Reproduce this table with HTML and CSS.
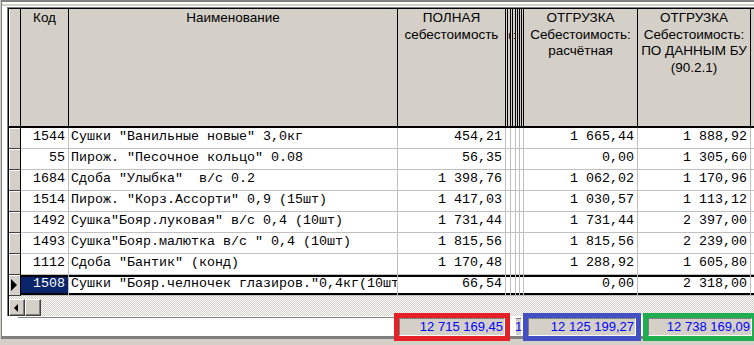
FILE: index.html
```html
<!DOCTYPE html>
<html lang="ru">
<head>
<meta charset="utf-8">
<title>Себестоимость</title>
<link rel="stylesheet" href="styles.css">
</head>
<body>
<div class="window">
  <div class="gridframe">
    <div class="grid">
      <div class="row head">
        <div class="c ind"></div>
        <div class="c">Код</div>
        <div class="c">Наименование</div>
        <div class="c"><span class="ln">ПОЛНАЯ</span><span class="ln">себестоимость</span></div>
        <div class="c nar"><span class="ln">&nbsp;</span><span class="ln">ı</span></div>
        <div class="c nar"><span class="ln">&nbsp;</span><span class="ln">:</span></div>
        <div class="c nar"><span class="ln">&nbsp;</span><span class="ln">ı</span></div>
        <div class="c nar"><span class="ln">&nbsp;</span><span class="ln">&nbsp;</span></div>
        <div class="c"><span class="ln">ОТГРУЗКА</span><span class="ln">Себестоимость:</span><span class="ln">расчётная</span></div>
        <div class="c"><span class="ln">ОТГРУЗКА</span><span class="ln">Себестоимость:</span><span class="ln">ПО ДАННЫМ БУ</span><span class="ln">(90.2.1)</span></div>
        <div class="c"><span class="ln">ОТГРУЗКА</span></div>
      </div>

      <div class="row">
        <div class="c ind"></div><div class="c num">1544</div><div class="c txt">Сушки "Ванильные новые" 3,0кг</div><div class="c num">454,21</div><div class="c"></div><div class="c"></div><div class="c"></div><div class="c"></div><div class="c num">1 665,44</div><div class="c num">1 888,92</div><div class="c"></div>
      </div>
      <div class="row">
        <div class="c ind"></div><div class="c num">55</div><div class="c txt">Пирож. "Песочное кольцо" 0.08</div><div class="c num">56,35</div><div class="c"></div><div class="c"></div><div class="c"></div><div class="c"></div><div class="c num">0,00</div><div class="c num">1 305,60</div><div class="c"></div>
      </div>
      <div class="row">
        <div class="c ind"></div><div class="c num">1684</div><div class="c txt">Сдоба "Улыбка"  в/с 0.2</div><div class="c num">1 398,76</div><div class="c"></div><div class="c"></div><div class="c"></div><div class="c"></div><div class="c num">1 062,02</div><div class="c num">1 170,96</div><div class="c"></div>
      </div>
      <div class="row">
        <div class="c ind"></div><div class="c num">1514</div><div class="c txt">Пирож. "Корз.Ассорти" 0,9 (15шт)</div><div class="c num">1 417,03</div><div class="c"></div><div class="c"></div><div class="c"></div><div class="c"></div><div class="c num">1 030,57</div><div class="c num">1 113,12</div><div class="c"></div>
      </div>
      <div class="row">
        <div class="c ind"></div><div class="c num">1492</div><div class="c txt">Сушка"Бояр.луковая" в/с 0,4 (10шт)</div><div class="c num">1 731,44</div><div class="c"></div><div class="c"></div><div class="c"></div><div class="c"></div><div class="c num">1 731,44</div><div class="c num">2 397,00</div><div class="c"></div>
      </div>
      <div class="row">
        <div class="c ind"></div><div class="c num">1493</div><div class="c txt">Сушка"Бояр.малютка в/с " 0,4 (10шт)</div><div class="c num">1 815,56</div><div class="c"></div><div class="c"></div><div class="c"></div><div class="c"></div><div class="c num">1 815,56</div><div class="c num">2 239,00</div><div class="c"></div>
      </div>
      <div class="row">
        <div class="c ind"></div><div class="c num">1112</div><div class="c txt">Сдоба "Бантик" (конд)</div><div class="c num">1 170,48</div><div class="c"></div><div class="c"></div><div class="c"></div><div class="c"></div><div class="c num">1 288,92</div><div class="c num">1 605,80</div><div class="c"></div>
      </div>
      <div class="row sel">
        <div class="c ind"><span class="cur"></span></div><div class="c num code">1508</div><div class="c txt">Сушки "Бояр.челночек глазиров."0,4кг(10шт)</div><div class="c num">66,54</div><div class="c"></div><div class="c"></div><div class="c"></div><div class="c"></div><div class="c num">0,00</div><div class="c num">2 318,00</div><div class="c"></div>
      </div>

      <div class="hscroll">
        <div class="sbtn"><span class="larr"></span></div>
        <div class="sbtn thumb"></div>
      </div>
    </div>
  </div>

  <div class="footer">
    <div class="fwhite"></div>
    <div class="field red">12 715 169,45</div>
    <div class="field narrow">1</div>
    <div class="field blue">12 125 199,27</div>
    <div class="field green">12 738 169,09</div>
  </div>
</div>
</body>
</html>
```

FILE: styles.css
```css
html, body {
  margin: 0;
  padding: 0;
}

body {
  width: 754px;
  height: 345px;
  overflow: hidden;
  background: #d4d0c8;
  font-family: "Liberation Sans", Arial, sans-serif;
}

.window {
  box-sizing: border-box;
  width: 753px;
  height: 339px;
  margin-left: 1px;
  border-left: 1px solid #808080;
  border-top: 2px solid #808080;
  border-bottom: 3px solid #808080;
  padding: 5px 0 0 5px;
  background: linear-gradient(#ffffff 0 2px, #d4d0c8 2px 4px, #ffffff 4px);
  display: flex;
  flex-direction: column;
}

.gridframe {
  box-sizing: border-box;
  flex: none;
  width: 830px;
  height: 309px;
  border-top: 1px solid #808080;
  border-left: 1px solid #808080;
  overflow: hidden;
}

.grid {
  width: 822px;
  border-top: 1px solid #000;
  border-left: 1px solid #000;
  background: #fff;
}

.row {
  display: grid;
  grid-template-columns: 12px 48px 329px 108px 5px 5px 4px 4px 114px 113px 80px;
}

.c {
  box-sizing: border-box;
  height: 21px;
  border-right: 1px solid #c0c0c0;
  border-bottom: 1px solid #c0c0c0;
  font-family: "Liberation Mono", "Courier New", monospace;
  font-size: 13.333px;
  line-height: 17px;
  white-space: pre;
  overflow: hidden;
  color: #000;
}

.num {
  text-align: right;
  padding-right: 3px;
}

.txt {
  padding-left: 2px;
}

.row .ind {
  background: #d4d0c8;
  border-right: 1px solid #000;
  border-bottom: 1px solid #404040;
  box-shadow: inset 1px 1px 0 #ffffff;
  display: flex;
  align-items: center;
}

/* header */
.head .c {
  height: 119px;
  background: #d4d0c8;
  border-right: 1px solid #000;
  border-bottom: 2px solid #000;
  font-family: "Liberation Sans", Arial, sans-serif;
  font-size: 13.5px;
  line-height: 16.5px;
  padding-top: 1px;
  text-align: center;
  white-space: nowrap;
}

.head .ind {
  border-bottom: 2px solid #000;
  box-shadow: inset 1px 0 0 #ffffff;
}

.head .nar {
  background: linear-gradient(to right, #d4d0c8 1px, #000 1px 2px, #d4d0c8 2px);
  text-align: left;
  font-size: 11px;
  text-indent: 2px;
}

.ln {
  display: block;
}

/* selected row */
.sel .c:not(.ind) {
  box-shadow: inset 0 2px 0 #000, inset 0 -2px 0 #000;
}

.sel .code {
  background: #0a246a;
  color: #fff;
}

.cur {
  display: block;
  width: 0;
  height: 0;
  margin-left: 2px;
  border-left: 6px solid #000;
  border-top: 6px solid transparent;
  border-bottom: 6px solid transparent;
}

/* scrollbar */
.hscroll {
  height: 20px;
  display: flex;
  align-items: flex-end;
  background-image: repeating-conic-gradient(#ffffff 0 25%, #d4d0c8 0 50%);
  background-size: 2px 2px;
}

.sbtn {
  box-sizing: border-box;
  width: 16px;
  height: 17px;
  background: #d4d0c8;
  border-top: 1px solid #ffffff;
  border-left: 1px solid #ffffff;
  border-right: 1px solid #404040;
  border-bottom: 1px solid #404040;
  box-shadow: inset -1px -1px 0 #808080;
  display: flex;
  align-items: center;
  justify-content: center;
}

.larr {
  width: 0;
  height: 0;
  margin-right: 2px;
  border-right: 4px solid #000;
  border-top: 4px solid transparent;
  border-bottom: 4px solid transparent;
}

/* footer with totals */
.footer {
  display: flex;
  align-items: flex-start;
  margin-top: 1px;
  margin-left: 11px;
}

.fwhite {
  box-sizing: border-box;
  width: 379px;
  height: 19px;
  border-top: 1px solid #808080;
  background: #fff;
}

.field {
  box-sizing: border-box;
  height: 18px;
  margin-top: 1px;
  background: #d4d0c8;
  border-top: 1px solid #808080;
  border-left: 1px solid #808080;
  border-right: 1px solid #ffffff;
  border-bottom: 1px solid #ffffff;
  color: #0000ff;
  font-size: 13px;
  line-height: 16px;
  text-align: right;
  padding-right: 1px;
  white-space: nowrap;
  overflow: hidden;
}

.red {
  width: 106px;
  margin-left: 2px;
  outline: 5px solid #e52127;
}

.narrow {
  width: 7px;
  margin-left: 10px;
  padding: 0;
  text-align: left;
  text-indent: -1px;
  border-left-color: #ffffff;
}

.blue {
  width: 108px;
  margin-left: 6px;
  outline: 5px solid #4350c4;
}

.green {
  width: 104px;
  margin-left: 12px;
  outline: 5px solid #1fae4f;
}
```
